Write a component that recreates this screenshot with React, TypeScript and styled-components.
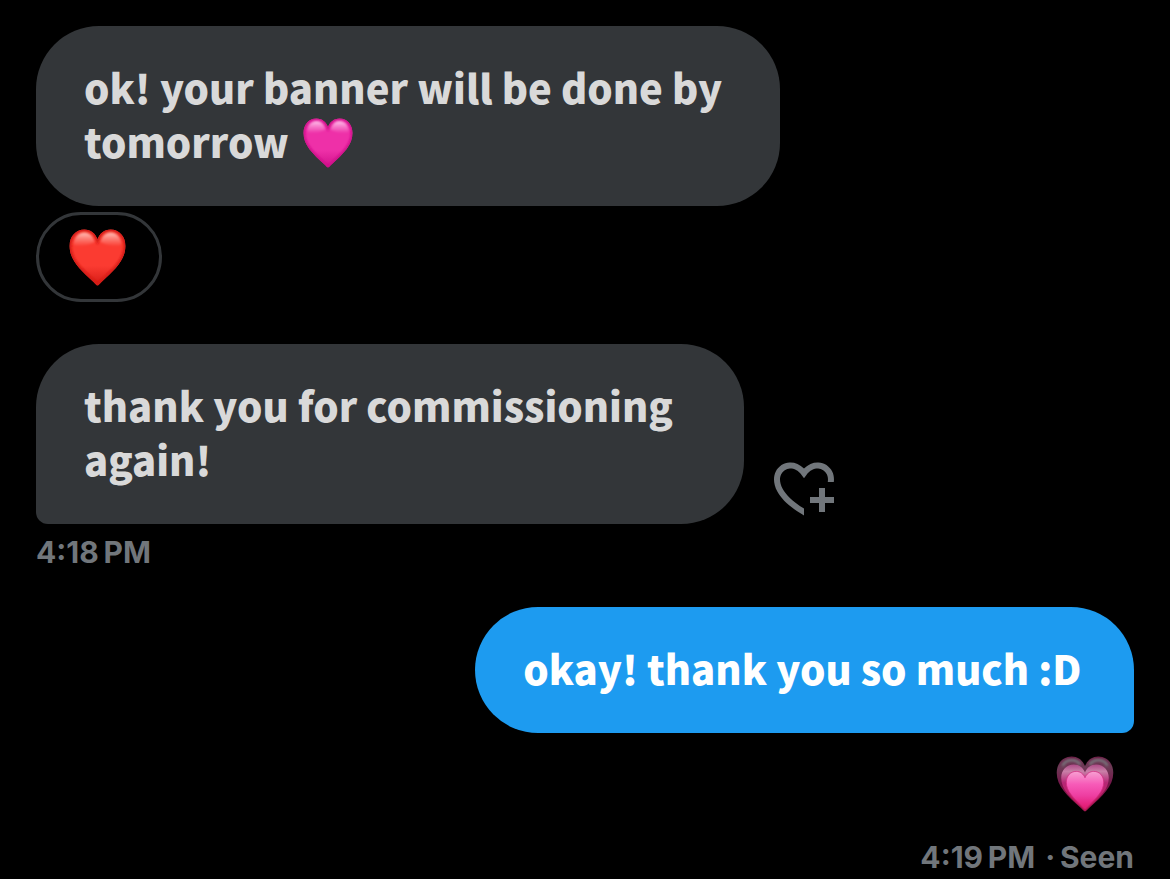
import React, { useId } from "react";
import styled, { createGlobalStyle, css } from "styled-components";

const GlobalStyle = createGlobalStyle`
  * { box-sizing: border-box; }
  body { margin: 0; background: #000; }
`;

const Conversation = styled.main`
  display: flex;
  flex-direction: column;
  padding: 26px 36px 0;
  font-family: "Noto Sans CJK JP", "Noto Sans", sans-serif;
  background: #000;
`;

const MessageRow = styled.div<{ $own?: boolean; $gap?: number }>`
  display: flex;
  align-items: flex-end;
  justify-content: ${(p) => (p.$own ? "flex-end" : "flex-start")};
  margin-top: ${(p) => p.$gap ?? 0}px;
`;

const Bubble = styled.p<{ $own?: boolean; $tail?: boolean; $max: number }>`
  margin: 0;
  min-width: 60%;
  max-width: ${(p) => p.$max}px;
  padding: 34px 48px 38px;
  border-radius: 63px;
  font-size: 40px;
  font-weight: 900;
  line-height: 54px;
  color: ${(p) => (p.$own ? "#fff" : "#d9d9d9")};
  background: ${(p) => (p.$own ? "#1d9bf0" : "#333639")};
  ${(p) =>
    p.$tail &&
    (p.$own
      ? css`border-bottom-right-radius: 12px;`
      : css`border-bottom-left-radius: 12px;`)}
`;

const Reaction = styled.button`
  display: flex;
  align-items: center;
  align-self: flex-start;
  width: 126px;
  height: 90px;
  margin-top: 6px;
  padding: 0 30px;
  border: 3px solid #333639;
  border-radius: 45px;
  background: #000;
`;

const AddReaction = styled.button`
  display: flex;
  margin-left: 24px;
  padding: 0;
  border: 0;
  color: #71767b;
  background: none;
`;

const OwnReaction = styled.div`
  display: flex;
  justify-content: flex-end;
  padding: 23px 20px 0;
`;

const Meta = styled.div<{ $own?: boolean; $gap: number }>`
  display: flex;
  justify-content: ${(p) => (p.$own ? "flex-end" : "flex-start")};
  gap: 10px;
  margin-top: ${(p) => p.$gap}px;
  font-family: Inter, "Liberation Sans", sans-serif;
  font-size: 30px;
  font-weight: 700;
  line-height: 36px;
  color: #71767b;
`;

const HeartSvg = styled.svg<{ $inline?: boolean }>`
  flex: none;
  display: ${(p) => (p.$inline ? "inline-block" : "block")};
  vertical-align: ${(p) => (p.$inline ? "-10px" : "baseline")};
  margin-left: ${(p) => (p.$inline ? 5 : 0)}px;
`;

const HEART =
  "M50 99C48 99 46 96 43 93C19 71 1 54 1 30C1 13 12 1 27 1C38 1 46 8 50 18C54 8 62 1 73 1C88 1 99 13 99 30C99 54 81 71 57 93C54 96 52 99 50 99Z";

type HeartProps = {
  size: number;
  label: string;
  top: string;
  mid: string;
  edge: string;
  inline?: boolean;
};

function Heart({ size, label, top, mid, edge, inline }: HeartProps) {
  const id = useId();
  return (
    <HeartSvg $inline={inline} width={size} height={size} viewBox="0 0 100 100" role="img" aria-label={label}>
      <defs>
        <linearGradient id={id + "f"} x1="0" y1="0" x2="0" y2="1">
          <stop offset="0" stopColor={mid} />
          <stop offset="0.65" stopColor={mid} />
          <stop offset="1" stopColor={edge} />
        </linearGradient>
        <linearGradient id={id + "g"} x1="0" y1="0" x2="0" y2="1">
          <stop offset="0" stopColor={top} />
          <stop offset="0.4" stopColor={top} stopOpacity="0.55" />
          <stop offset="1" stopColor={top} stopOpacity="0" />
        </linearGradient>
        <filter id={id + "b"} x="-20%" y="-20%" width="140%" height="140%">
          <feGaussianBlur stdDeviation="2" />
        </filter>
        <clipPath id={id + "c"}>
          <path d={HEART} />
        </clipPath>
      </defs>
      <path d={HEART} fill={`url(#${id}f)`} />
      <g clipPath={`url(#${id}c)`}>
        <path d={HEART} fill="none" stroke={edge} strokeWidth="7" filter={`url(#${id}b)`} />
        <g fill={`url(#${id}g)`} filter={`url(#${id}b)`}>
          <path d="M8 26C10 13 17 6 27 6C36 6 42 12 45 23C37 27 12 36 8 26Z" />
          <path d="M92 26C90 13 83 6 73 6C64 6 58 12 55 23C63 27 88 36 92 26Z" />
        </g>
      </g>
    </HeartSvg>
  );
}

function GrowingHeart() {
  return (
    <HeartSvg width="58" height="56" viewBox="0 0 100 97" role="img" aria-label="Growing heart">
      <defs>
        <linearGradient id="outer" x1="0" y1="0" x2="0" y2="1">
          <stop offset="0" stopColor="#6c2148" />
          <stop offset="0.2" stopColor="#6d3b56" />
          <stop offset="0.5" stopColor="#76154a" />
          <stop offset="1" stopColor="#a81952" />
        </linearGradient>
        <linearGradient id="middle" x1="0" y1="0" x2="0" y2="1">
          <stop offset="0" stopColor="#ad4a86" />
          <stop offset="0.15" stopColor="#c980a8" />
          <stop offset="0.4" stopColor="#b52775" />
          <stop offset="1" stopColor="#d1165e" />
        </linearGradient>
        <linearGradient id="inner" x1="0" y1="0" x2="0" y2="1">
          <stop offset="0" stopColor="#f7a0d2" />
          <stop offset="0.35" stopColor="#f75bb8" />
          <stop offset="0.65" stopColor="#ee3fa2" />
          <stop offset="1" stopColor="#e31870" />
        </linearGradient>
        <filter id="soft" x="-20%" y="-40%" width="140%" height="180%">
          <feGaussianBlur stdDeviation="2" />
        </filter>
      </defs>
      <path d={HEART} transform="scale(1 .97)" fill="url(#outer)" />
      <g fill="none" stroke="#777078" strokeWidth="5" filter="url(#soft)">
        <path d="M11 17C17 5 34 4 42 15" />
        <path d="M89 17C83 5 66 4 58 15" />
      </g>
      <path d={HEART} transform="translate(8 14) scale(.84 .8)" fill="url(#middle)" />
      <path d={HEART} transform="translate(17 26) scale(.66 .65)" fill="url(#inner)" stroke="#d52a82" strokeWidth="2" />
    </HeartSvg>
  );
}

function HeartPlusIcon() {
  return (
    <svg width="72" height="72" viewBox="0 0 24 24" fill="currentColor" aria-hidden="true">
      <path d="M17 12v3h-2.998v2h3v3h2v-3h3v-2h-3.001v-3H17zm-5 6.839c-3.871-2.34-6.053-4.639-7.127-6.609-1.112-2.04-1.031-3.7-.479-4.82.561-1.13 1.667-1.84 2.91-1.91 1.222-.06 2.68.51 3.892 2.16l.806 1.09.805-1.09c1.211-1.65 2.668-2.22 3.89-2.16 1.242.07 2.347.78 2.908 1.91.334.677.49 1.554.321 2.59h2.011c.153-1.283-.039-2.469-.539-3.48-.887-1.79-2.647-2.91-4.601-3.01-1.65-.09-3.367.56-4.796 2.01-1.43-1.45-3.147-2.1-4.798-2.01-1.954.1-3.714 1.22-4.601 3.01-.896 1.81-.846 4.17.514 6.67 1.353 2.48 4.003 5.12 8.382 7.67l.502.299v-2.32z" />
    </svg>
  );
}

export default function App() {
  return (
    <>
      <GlobalStyle />
      <Conversation>
        <MessageRow>
          <Bubble $max={744}>
            ok! your banner will be done by tomorrow{" "}
            <Heart inline size={50} label="Pink heart" top="#ffc4ec" mid="#ee30a8" edge="#d0108a" />
          </Bubble>
        </MessageRow>
        <Reaction aria-label="Red heart reaction">
          <Heart size={57} label="Red heart" top="#ffc0b8" mid="#fb3b31" edge="#d41a14" />
        </Reaction>

        <MessageRow $gap={42}>
          <Bubble $max={708} $tail>
            thank you for commissioning again!
          </Bubble>
          <AddReaction aria-label="Add reaction">
            <HeartPlusIcon />
          </AddReaction>
        </MessageRow>
        <Meta $gap={10}>
          <time>4:18{"\u2009"}PM</time>
        </Meta>

        <MessageRow $own $gap={37}>
          <Bubble $own $tail $max={744}>
            okay! thank you so much :D
          </Bubble>
        </MessageRow>
        <OwnReaction>
          <GrowingHeart />
        </OwnReaction>
        <Meta $own $gap={27}>
          <time>4:19{"\u2009"}PM</time>
          <span>·{"\u2009"}Seen</span>
        </Meta>
      </Conversation>
    </>
  );
}
